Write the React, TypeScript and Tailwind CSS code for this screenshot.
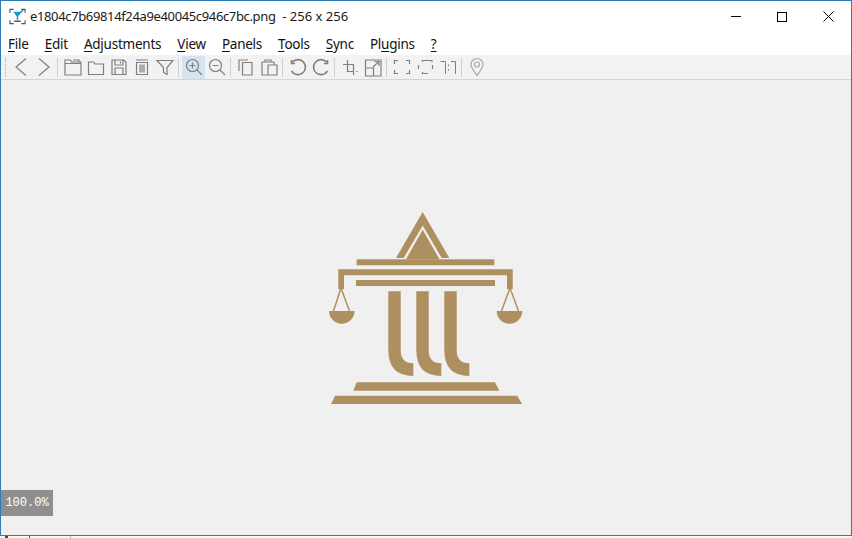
const menus = [
  { pre: "", key: "F", post: "ile" },
  { pre: "", key: "E", post: "dit" },
  { pre: "", key: "A", post: "djustments" },
  { pre: "", key: "V", post: "iew" },
  { pre: "", key: "P", post: "anels" },
  { pre: "", key: "T", post: "ools" },
  { pre: "", key: "S", post: "ync" },
  { pre: "Pl", key: "u", post: "gins" },
  { pre: "", key: "?", post: "" },
];

function Icon({ children, active, light }: { children: React.ReactNode; active?: boolean; light?: boolean }) {
  return (
    <div
      className={`flex h-[23px] w-[23px] items-center justify-center ${active ? "bg-[#d5e4f0]" : ""}`}
    >
      <svg width="20" height="20" viewBox="0 0 20 20" fill="none" stroke={light ? "#a8a8a8" : "#7f7f7f"} strokeWidth="1.2">
        {children}
      </svg>
    </div>
  );
}

function Sep() {
  return <div className="ml-[2px] mr-[3px] h-[19px] w-px bg-[#d0d0d0]" />;
}

function Logo() {
  const gold = "#ae9060";
  const column = (x: number) =>
    `M${x} 291.3 h12.4 V350 Q${x + 12.4} 363.3 ${x + 25} 363.3 V376 Q${x} 376 ${x} 350 Z`;
  return (
    <svg width="256" height="256" viewBox="298 180 256 256">
      <path fill={gold} d="M422.7 212 L449.3 258 H441.7 L422.7 225.5 L403.7 258 H396 Z" />
      <path fill={gold} d="M422.7 229.7 L439.6 259.5 H405.8 Z" />
      <rect fill={gold} x="356.7" y="259.3" width="137.6" height="6" />
      <path fill={gold} d="M338.3 269.3 H512.7 V289 H507 V275.3 H344 V289 H338.3 Z" />
      <rect fill={gold} x="356" y="280" width="139" height="6" />
      <path fill={gold} d={column(388.3)} />
      <path fill={gold} d={column(416.3)} />
      <path fill={gold} d={column(444.3)} />
      <path fill={gold} d="M356.7 382.3 H495 L499.3 390.7 H353.3 Z" />
      <path fill={gold} d="M335 395.7 H517.3 L522 404 H331 Z" />
      <path fill="none" stroke={gold} strokeWidth="1.5" d="M341 288 L333.5 311 M341 288 L349.5 311" />
      <path fill="none" stroke={gold} strokeWidth="1.5" d="M510 288 L501.5 311 M510 288 L518.5 311" />
      <path fill={gold} d="M329 311 H354.5 A12.75 12.75 0 0 1 329 311 Z" />
      <path fill={gold} d="M496.7 311 H522.3 A12.8 12.8 0 0 1 496.7 311 Z" />
    </svg>
  );
}

export default function App() {
  return (
    <div className="flex h-[538px] w-[852px] flex-col overflow-hidden bg-[#f6f6f6] font-['Noto_Sans',sans-serif] text-black">
      <div className="flex h-[536px] shrink-0 flex-col border border-[#2d7cb8]">
        {/* Title bar */}
        <div className="flex h-[31px] shrink-0 items-center bg-white">
          <svg className="ml-[8px]" width="17" height="17" viewBox="0 0 18 18" fill="none">
            <path d="M1 5V1.5H5M13 1.5H17V5M1 13V16.5H5M13 16.5H17V13" stroke="#3a5a70" strokeWidth="1.2" />
            <path d="M4.5 4H13.5L9.8 9V13H8.2V9Z" fill="#1c9ad6" />
            <path d="M12 5L15 2" stroke="#1c6f9a" strokeWidth="1.2" />
            <path d="M5.5 14H12.5" stroke="#20303a" strokeWidth="1.2" />
          </svg>
          <span className="ml-[4px] text-[13px] whitespace-pre text-[#1a1a1a]">
            <span className="tracking-[-0.36px]">e1804c7b69814f24a9e40045c946c7bc.png</span>  - 256 x 256
          </span>
          <div className="ml-auto flex items-center">
            <button className="flex h-[31px] w-[46px] items-center justify-center">
              <span className="h-px w-[10px] bg-black" />
            </button>
            <button className="flex h-[31px] w-[46px] items-center justify-center">
              <span className="h-[10px] w-[10px] border border-black" />
            </button>
            <button className="flex h-[31px] w-[46px] items-center justify-center">
              <svg width="11" height="11" viewBox="0 0 11 11" stroke="#000" strokeWidth="1">
                <path d="M0.5 0.5L10.5 10.5M10.5 0.5L0.5 10.5" />
              </svg>
            </button>
          </div>
        </div>

        {/* Menu */}
        <div className="flex h-[23px] shrink-0 items-center gap-[16px] bg-white pl-[7px] pt-[2px] text-[13.5px] tracking-[-0.24px] text-[#111]">
          {menus.map((m) => (
            <span key={m.key + m.post} className="whitespace-pre">
              {m.pre}
              <span className="underline underline-offset-2">{m.key}</span>
              {m.post}
            </span>
          ))}
        </div>

        {/* Toolbar */}
        <div className="flex h-[25px] shrink-0 items-center border-b border-[#d4d4d4] bg-[#f2f2f2] pl-[4px]">
          <div className="mr-[2px] h-[19px] w-[2px] border-l border-dotted border-[#aaa]" />
          <Icon><path d="M15 1.5L5 10L15 18.5" /></Icon>
          <Icon><path d="M5 1.5L15 10L5 18.5" /></Icon>
          <Sep />
          <Icon><path d="M2 6.5V18H18V5H8.5L7.5 3H2V6.5H18M10 3H16V5" /></Icon>
          <Icon><path d="M2.5 5V17.5H17.5V7H9L7.5 5H2.5Z" /></Icon>
          <Icon><path d="M3 3H15L17 5V17.5H3ZM6 3V8H14V3M11.5 4.5V6.5M6 17.5V11H14V17.5" /></Icon>
          <Icon><path d="M4 3H16M4.5 5.5H15.5V17.5H4.5ZM8 7.5V15.5M10 7.5V15.5M12 7.5V15.5" /></Icon>
          <Icon><path d="M2 3.5H18L12 10.5V17.5L8.5 15.5V10.5Z" /></Icon>
          <Sep />
          <Icon active>
            <circle cx="8.5" cy="8.5" r="6" />
            <path d="M13 13L18 18M5.5 8.5H11.5M8.5 5.5V11.5" />
          </Icon>
          <Icon>
            <circle cx="8.5" cy="8.5" r="6" />
            <path d="M13 13L18 18M5.5 8.5H11.5" />
          </Icon>
          <Sep />
          <Icon><path d="M3 14V3H12M6.5 5.5H16V18H6.5Z" /></Icon>
          <Icon><path d="M6 5V3H12V5M9 18H3V5H15V8M9 8H18V18H9Z" /></Icon>
          <Sep />
          <Icon><path strokeWidth="1.6" d="M4.5 5A7.5 7.5 0 1 1 3.5 14M3.5 3V6.5H7" /></Icon>
          <Icon><path strokeWidth="1.6" d="M15.5 5A7.5 7.5 0 1 0 16.5 14M16.5 3V6.5H13" /></Icon>
          <Sep />
          <Icon><path d="M7.5 3V14.5H14M3 7.5H13.5V18M16 14.5H17.5" /></Icon>
          <Icon><path d="M2.5 11V3H18V19H10.5M2.5 11H10.5V19H2.5ZM10 10L16 4.5M11.5 4.5H16V9" /></Icon>
          <Sep />
          <Icon><path d="M2.5 7V3.5H6M14 3.5H17.5V7M2.5 13V16.5H6M14 16.5H17.5V13" /></Icon>
          <Icon><path d="M7.5 5V3.5H17V5M7.5 15V16.5H13M3.5 8V12M17.5 8V12" /></Icon>
          <Icon><path strokeWidth="1" d="M2.5 4.5H7.5V17M13 4.5H17.5V17M10.5 7.5V9M10.5 12V13.5" /></Icon>
          <Sep />
          <Icon light>
            <path d="M10 18.5C7 14 4 11 4 7.5A6 6 0 0 1 16 7.5C16 11 13 14 10 18.5Z" />
            <circle cx="10" cy="7.5" r="2.5" />
          </Icon>
        </div>

        {/* Canvas */}
        <div className="relative flex min-h-0 flex-1 items-center justify-center bg-[#f0f0f0]">
          <Logo />
          <div className="absolute bottom-[19px] left-0 flex h-[26px] w-[52px] items-center justify-center bg-[#8f8f8f] font-['Liberation_Mono',monospace] text-[12px] text-white">
            100.0%
          </div>
        </div>
      </div>

      {/* Sliver of whatever sits behind the window */}
      <div className="flex h-[2px] items-start">
        <span className="ml-[5px] h-[2px] w-[3px] bg-[#2a4a66]" />
        <span className="ml-[21px] h-[2px] w-px bg-[#44606f]" />
        <span className="ml-[40px] h-[2px] w-px bg-[#b5b5b5]" />
      </div>
    </div>
  );
}
